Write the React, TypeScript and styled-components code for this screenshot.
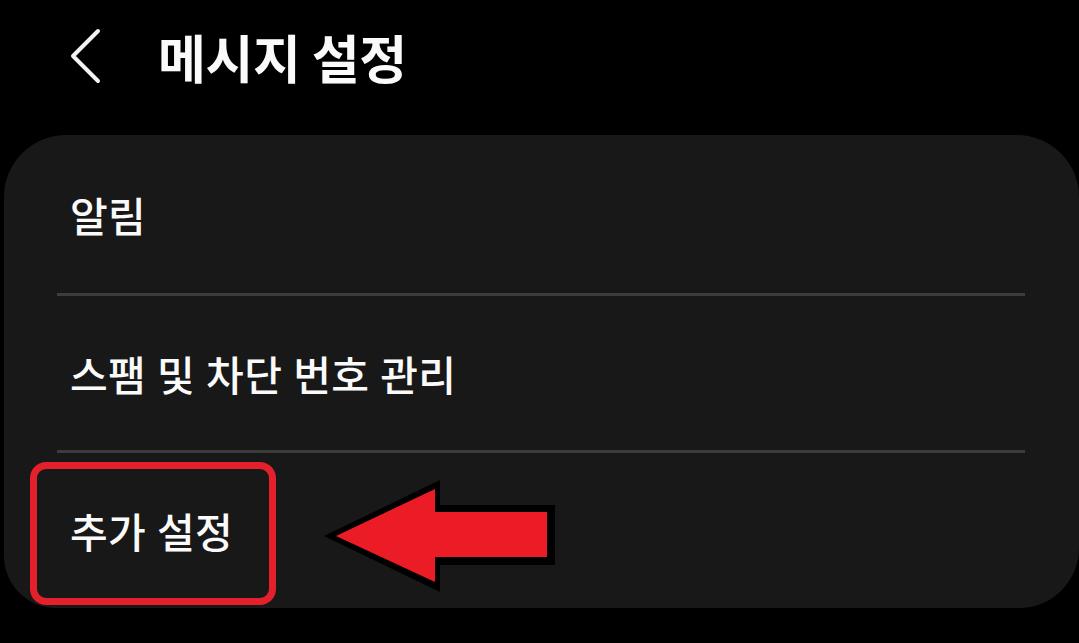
import React from "react";
import styled, { createGlobalStyle } from "styled-components";

const Global = createGlobalStyle`
  html, body { margin: 0; padding: 0; background: #000; }
  body { font-family: "Noto Sans CJK KR", "Noto Sans", sans-serif; color: #fafafa; }
  * { box-sizing: border-box; }
`;

const Screen = styled.div`
  width: 1079px;
  height: 643px;
  background: #000;
  overflow: hidden;
  display: flex;
  flex-direction: column;
`;

const Header = styled.header`
  height: 120px;
  display: flex;
  align-items: center;
  padding-left: 66px;
  gap: 52px;
`;

const BackButton = styled.button`
  width: 40px;
  height: 60px;
  padding: 0;
  border: 0;
  background: transparent;
  display: flex;
  align-items: center;
  justify-content: center;
  transform: translateY(-3px);
`;

const Title = styled.h1`
  margin: 0;
  font-size: 52px;
  font-weight: 700;
  color: #fafafa;
  letter-spacing: -0.4px;
  line-height: 1;
  transform: translateY(-3px);
`;

const Card = styled.section`
  margin: 15px 0 0 4px;
  width: 1075px;
  background: #181818;
  border-radius: 62px 62px 60px 52px;
  display: flex;
  flex-direction: column;
`;

const Row = styled.div`
  position: relative;
  height: ${(p: { $h: number }) => p.$h}px;
  display: flex;
  align-items: center;
  padding-left: 66px;
`;

const RowLabel = styled.span`
  font-size: 41px;
  font-weight: 500;
  color: #fafafa;
  letter-spacing: 0.3px;
  word-spacing: 1.5px;
  line-height: 1;
`;

const Divider = styled.div`
  height: 3px;
  margin: 0 54px 0 53px;
  background: #3c3c3c;
`;

const Highlight = styled.div`
  position: absolute;
  left: 26px;
  top: 9px;
  width: 246px;
  height: 143px;
  border: 7px solid #e3202b;
  border-radius: 16px;
  pointer-events: none;
`;

const Arrow = styled.svg`
  position: absolute;
  left: 0;
  top: 0;
  overflow: visible;
  pointer-events: none;
`;

export default function App() {
  return (
    <>
      <Global />
      <Screen>
        <Header>
          <BackButton aria-label="뒤로">
            <svg width="34" height="58" viewBox="0 0 34 58">
              <polyline
                points="29,3 4,28 29,53"
                fill="none"
                stroke="#f2f2f2"
                strokeWidth="4"
                strokeLinecap="round"
                strokeLinejoin="round"
              />
            </svg>
          </BackButton>
          <Title>메시지 설정</Title>
        </Header>
        <Card>
          <Row $h={158}>
            <RowLabel>알림</RowLabel>
          </Row>
          <Divider />
          <Row $h={154}>
            <RowLabel>스팸 및 차단 번호 관리</RowLabel>
          </Row>
          <Divider />
          <Row $h={155}>
            <RowLabel>추가 설정</RowLabel>
            <Highlight />
            <Arrow width="1" height="1">
              <polygon
                points="320,83 436,27 436,52 551,52 551,112 436,112 436,139"
                fill="#000"
              />
              <polygon
                points="332,83 431,36 431,59 543,59 543,104 431,104 431,129"
                fill="#ec1c27"
              />
            </Arrow>
          </Row>
        </Card>
      </Screen>
    </>
  );
}
